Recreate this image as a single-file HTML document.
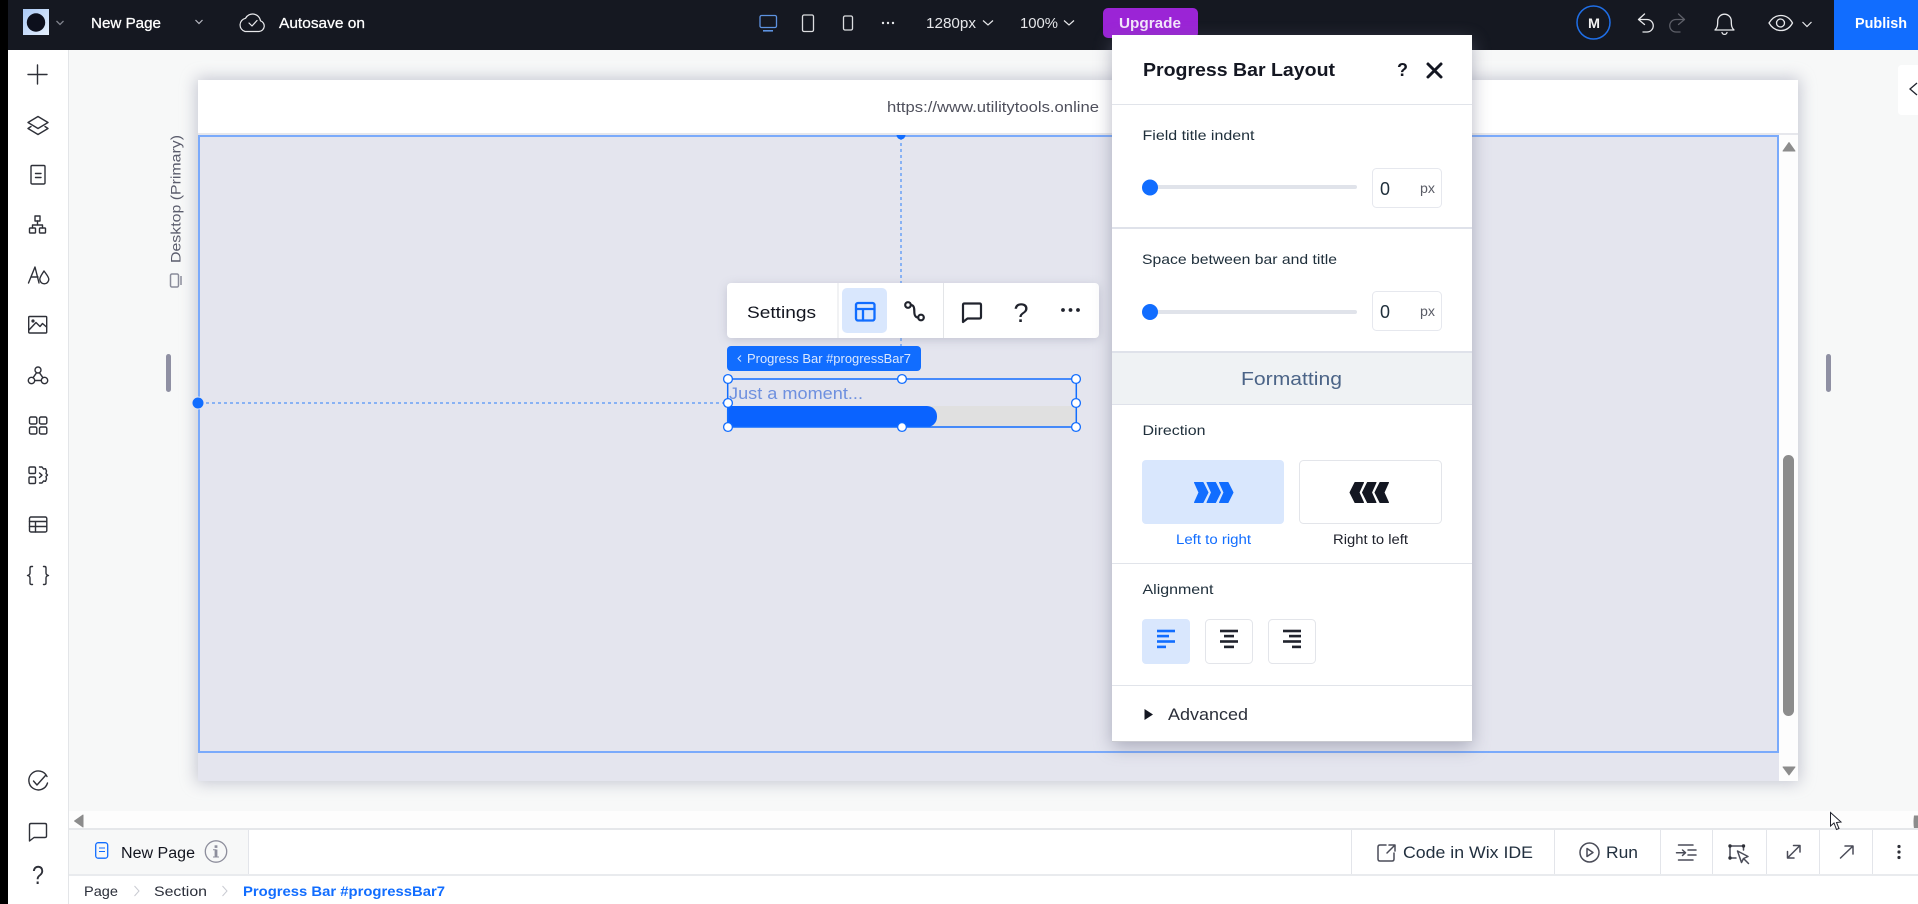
<!DOCTYPE html>
<html lang="en"><head><meta charset="utf-8"><title>Progress Bar Layout</title>
<style>
html,body{margin:0;padding:0;width:1918px;height:904px;overflow:hidden;background:#f7f8f8}
svg{display:block;position:absolute;left:0;top:0}
text{font-family:"Liberation Sans",sans-serif;white-space:pre}
.st{fill:none;stroke-linecap:round;stroke-linejoin:round}
.side{fill:none;stroke:#2e3038;stroke-width:1.4;stroke-linecap:round;stroke-linejoin:round}
.low{fill:none;stroke:#4a4c58;stroke-width:1.5;stroke-linecap:round;stroke-linejoin:round}
</style></head><body>
<svg width="1918" height="904" viewBox="0 0 1918 904" xmlns="http://www.w3.org/2000/svg">
<defs>
<filter id="s1" x="-10%" y="-10%" width="120%" height="120%"><feGaussianBlur stdDeviation="8"/></filter>
<filter id="s2" x="-20%" y="-20%" width="140%" height="140%"><feGaussianBlur stdDeviation="9"/></filter>
<filter id="s3" x="-20%" y="-40%" width="140%" height="180%"><feGaussianBlur stdDeviation="5"/></filter>
<linearGradient id="lg" x1="0" y1="0" x2="1" y2="1"><stop offset="0" stop-color="#a9c8f5"/><stop offset="1" stop-color="#e6f0fd"/></linearGradient>
</defs>

<!-- canvas -->
<rect width="1918" height="904" fill="#f7f8f8"/>
<rect x="196" y="78" width="1604" height="705" fill="#a9abbc" opacity=".65" filter="url(#s1)"/>
<rect x="198" y="80" width="1600" height="53" fill="#fff"/>
<rect x="198" y="133" width="1600" height="2" fill="#e6e7ec"/>
<rect x="198" y="135" width="1600" height="646" fill="#e4e5ee"/>
<rect x="1779" y="135" width="19" height="646" fill="#fdfdfd"/>
<rect x="199" y="136" width="1579" height="616" fill="none" stroke="#7aaafb" stroke-width="2"/>
<text x="887" y="112" font-size="14.5" fill="#4f505c" textLength="212" lengthAdjust="spacingAndGlyphs">https://www.utilitytools.online</text>

<!-- scrollbar -->
<path d="M1783 151 L1789 142.5 L1795 151 Z" fill="#8c8c8c" stroke="#8c8c8c" stroke-linejoin="round"/>
<rect x="1783" y="455" width="11" height="261" rx="5.5" fill="#8c8c8c"/>
<path d="M1783 767 L1795 767 L1789 775 Z" fill="#8c8c8c" stroke="#8c8c8c" stroke-linejoin="round"/>

<!-- side handles -->
<rect x="166" y="354" width="5" height="38" rx="2.5" fill="#8f90a3"/>
<rect x="1826" y="354" width="5" height="38" rx="2.5" fill="#8f90a3"/>

<!-- desktop label -->
<g transform="translate(180.5,263) rotate(-90)"><text x="0" y="0" font-size="14" fill="#5a5c6c" textLength="128" lengthAdjust="spacingAndGlyphs">Desktop (Primary)</text></g>
<rect x="170.5" y="274" width="8" height="13" rx="1.5" fill="none" stroke="#8a8c9a" stroke-width="1.5"/><path d="M181 276 V285" stroke="#8a8c9a" stroke-width="1.5"/>

<!-- dashed guides + handles -->
<path d="M901 137 V283 M901 338 V346" stroke="#2b7ffb" stroke-width="1" stroke-dasharray="3 3"/>
<path d="M200 403 H727" stroke="#2b7ffb" stroke-width="1" stroke-dasharray="3 3"/>
<path d="M896.5 135 a4.5 4.5 0 0 0 9 0 Z" fill="#116dff"/>
<circle cx="198" cy="403" r="6" fill="#116dff" stroke="#e4e5ee" stroke-width="1"/>

<!-- floating toolbar -->
<rect x="727" y="285" width="372" height="55" rx="6" fill="#8f91a8" opacity=".4" filter="url(#s3)"/>
<rect x="727" y="283" width="372" height="55" rx="4" fill="#fff"/>
<rect x="837.5" y="283" width="1" height="55" fill="#e3e5e8"/>
<rect x="943" y="283" width="1" height="55" fill="#e3e5e8"/>
<rect x="842" y="288" width="45" height="45" rx="5" fill="#d9e7fd"/>
<text x="747" y="318" font-size="17" fill="#12151f" textLength="69" lengthAdjust="spacingAndGlyphs">Settings</text>
<g class="st" stroke="#116dff" stroke-width="2.3"><rect x="856" y="303" width="18.5" height="17.5" rx="2"/><path d="M856 309 H874.5 M863 309 V320.5"/></g>
<g class="st" stroke="#20232d" stroke-width="2.2"><circle cx="908" cy="305" r="2.8"/><circle cx="921" cy="317.5" r="2.8"/><path d="M910.8 305 C914 305 914.3 308 914.3 311 C914.3 315 915 317.5 918.2 317.5"/>
<path d="M963 305 q0-1.5 1.5-1.5 h15 q1.5 0 1.5 1.5 v12 q0 1.5 -1.5 1.5 h-12 l-4.5 3.5 z"/></g>
<text x="1013.5" y="322" font-size="27" fill="#20232d" textLength="15" lengthAdjust="spacingAndGlyphs">?</text>
<circle cx="1063" cy="310" r="1.9" fill="#20232d"/><circle cx="1070.5" cy="310" r="1.9" fill="#20232d"/><circle cx="1078" cy="310" r="1.9" fill="#20232d"/>

<!-- tag -->
<rect x="727" y="346" width="194" height="25" rx="4" fill="#116dff"/>
<path d="M741 355.5 L738 358.5 L741 361.5" fill="none" stroke="#d8e6fe" stroke-width="1"/>
<text x="747" y="363" font-size="12.5" fill="#dbe8fe" textLength="164" lengthAdjust="spacingAndGlyphs">Progress Bar #progressBar7</text>

<!-- progress bar -->
<rect x="728" y="406" width="348" height="20.5" fill="#e0e0e0"/>
<path d="M728 406 H927 a10 10 0 0 1 10 10 v1 a10 10 0 0 1 -10 10 H728 Z" fill="#0a63ff"/>
<text x="729" y="399" font-size="17" fill="#6e90df" textLength="134" lengthAdjust="spacingAndGlyphs">Just a moment...</text>
<rect x="727.7" y="379" width="348.6" height="48" fill="none" stroke="#116dff" stroke-width="1.5"/>
<g fill="#fff" stroke="#116dff" stroke-width="1.3">
<circle cx="728" cy="379" r="4.4"/><circle cx="902" cy="379" r="4.4"/><circle cx="1076" cy="379" r="4.4"/>
<circle cx="728" cy="403" r="4.4"/><circle cx="1076" cy="403" r="4.4"/>
<circle cx="728" cy="427" r="4.4"/><circle cx="902" cy="427" r="4.4"/><circle cx="1076" cy="427" r="4.4"/>
</g>

<!-- right collapsed tab -->
<path d="M1918 65 H1902 q-4 0 -4 4 V111 q0 4 4 4 H1918 Z" fill="#fff"/>
<path d="M1917 83 L1910 89 L1917 95" fill="none" stroke="#20232d" stroke-width="1.3"/>

<!-- top bar -->
<rect x="8" y="0" width="1910" height="50" fill="#151821"/>
<rect x="23" y="9" width="26" height="26" fill="url(#lg)"/>
<circle cx="36" cy="22.5" r="9.2" fill="#0c0f1c"/>
<path d="M56.5 21 L60 24.5 L63.5 21" fill="none" stroke="#7f828c" stroke-width="1.3"/>
<text x="91" y="28" font-size="14.5" fill="#fff" stroke="#fff" stroke-width=".25" textLength="70" lengthAdjust="spacingAndGlyphs">New Page</text>
<path d="M195.5 20 L199 23.5 L202.5 20" fill="none" stroke="#b8bac2" stroke-width="1.2"/>
<g class="st" stroke="#e8e9ec" stroke-width="1.2"><path d="M245 31.5 h14 a5.5 5.5 0 0 0 1.5 -10.7 a8 8 0 0 0 -15 -2.5 a6.8 6.8 0 0 0 -.5 13.2 z"/><path d="M249 23 l3 3 l5 -5.5"/></g>
<text x="279" y="28" font-size="14.5" fill="#fff" stroke="#fff" stroke-width=".25" textLength="86" lengthAdjust="spacingAndGlyphs">Autosave on</text>

<rect x="760" y="15.5" width="16.5" height="12" rx="1.5" fill="none" stroke="#5d92e0" stroke-width="1.3"/>
<rect x="763" y="30" width="10" height="1.6" fill="#5d92e0"/>
<rect x="802.5" y="15" width="11" height="16.5" rx="1.5" fill="none" stroke="#dcdde0" stroke-width="1.3"/>
<rect x="843.5" y="16" width="9" height="14" rx="1.5" fill="none" stroke="#dcdde0" stroke-width="1.3"/>
<circle cx="883" cy="23" r="1.2" fill="#e6e7ea"/><circle cx="888" cy="23" r="1.2" fill="#e6e7ea"/><circle cx="893" cy="23" r="1.2" fill="#e6e7ea"/>
<text x="926" y="28" font-size="14.5" fill="#e6e7ea" textLength="50" lengthAdjust="spacingAndGlyphs">1280px</text>
<path d="M983 20.5 L988 25 L993 20.5" fill="none" stroke="#e6e7ea" stroke-width="1.2"/>
<text x="1020" y="28" font-size="14.5" fill="#e6e7ea" textLength="38" lengthAdjust="spacingAndGlyphs">100%</text>
<path d="M1064 20.5 L1069 25 L1074 20.5" fill="none" stroke="#e6e7ea" stroke-width="1.2"/>
<rect x="1103" y="8" width="95" height="30" rx="5" fill="#9b24d6"/>
<text x="1119" y="28" font-size="14.5" font-weight="700" fill="#f3e6fb" textLength="62" lengthAdjust="spacingAndGlyphs">Upgrade</text>

<circle cx="1593.5" cy="22.5" r="16.5" fill="none" stroke="#1f6fe8" stroke-width="1.5"/>
<text x="1588" y="28" font-size="13.5" font-weight="700" fill="#f2f2f2" textLength="12" lengthAdjust="spacingAndGlyphs">M</text>
<g class="st" stroke="#e8e9ec" stroke-width="1.3"><path d="M1644.5 14 L1638.5 19.5 L1644.5 24.5 M1639 19.5 H1647 a6 6 0 0 1 0 12.5 H1643"/></g>
<g class="st" stroke="#5d5f68" stroke-width="1.3"><path d="M1678.5 14 L1684.5 19.5 L1678.5 24.5 M1684 19.5 H1676 a6 6 0 0 0 0 12.5 H1680"/></g>
<g class="st" stroke="#e8e9ec" stroke-width="1.3"><path d="M1715 30 c2.5 -2 2.7 -5 2.7 -9 a6.8 6.8 0 0 1 13.6 0 c0 4 .2 7 2.7 9 Z M1722 32.5 a2.6 2.6 0 0 0 5 0"/>
<path d="M1769 23 c6 -10 18 -10 23.5 0 c-5.5 10 -17.5 10 -23.5 0 Z"/><circle cx="1780.5" cy="23" r="4"/></g>
<path d="M1802.5 22 L1807 26.5 L1811.5 22" fill="none" stroke="#e8e9ec" stroke-width="1.2"/>
<rect x="1834" y="0" width="84" height="50" fill="#116dff"/>
<text x="1855" y="28" font-size="14.5" font-weight="700" fill="#fff" textLength="52" lengthAdjust="spacingAndGlyphs">Publish</text>

<!-- panel -->
<rect x="1112" y="41" width="360" height="706" fill="#6f7188" opacity=".5" filter="url(#s2)"/>
<rect x="1112" y="35" width="360" height="706" fill="#fff"/>
<rect x="1112" y="741" width="360" height="1" fill="#c9cad0"/>
<text x="1143" y="76" font-size="18" font-weight="700" fill="#141722" textLength="192" lengthAdjust="spacingAndGlyphs">Progress Bar Layout</text>
<text x="1397" y="76" font-size="18" font-weight="700" fill="#141722">?</text>
<path d="M1428 64 L1441 77 M1441 64 L1428 77" stroke="#141722" stroke-width="3" stroke-linecap="round"/>
<rect x="1112" y="104" width="360" height="1" fill="#e1e4ea"/>

<text x="1142.5" y="140" font-size="14" fill="#20303c" textLength="112" lengthAdjust="spacingAndGlyphs">Field title indent</text>
<rect x="1150" y="185" width="207" height="4" rx="2" fill="#e0e3ea"/>
<circle cx="1150" cy="187.5" r="8" fill="#116dff"/>
<rect x="1372.5" y="168.5" width="69" height="39" rx="4" fill="#fff" stroke="#e6e8ee"/>
<text x="1380" y="195" font-size="18" fill="#20303c" textLength="10" lengthAdjust="spacingAndGlyphs">0</text>
<text x="1420" y="193" font-size="14" fill="#5a5c66" textLength="15" lengthAdjust="spacingAndGlyphs">px</text>
<rect x="1112" y="227" width="360" height="2" fill="#dfe2ea"/>

<text x="1142" y="264" font-size="14" fill="#20303c" textLength="195" lengthAdjust="spacingAndGlyphs">Space between bar and title</text>
<rect x="1150" y="310" width="207" height="4" rx="2" fill="#e0e3ea"/>
<circle cx="1150" cy="312" r="8" fill="#116dff"/>
<rect x="1372.5" y="291.5" width="69" height="39" rx="4" fill="#fff" stroke="#e6e8ee"/>
<text x="1380" y="318" font-size="18" fill="#20303c" textLength="10" lengthAdjust="spacingAndGlyphs">0</text>
<text x="1420" y="316" font-size="14" fill="#5a5c66" textLength="15" lengthAdjust="spacingAndGlyphs">px</text>

<rect x="1112" y="351" width="360" height="53" fill="#eff2f4"/>
<rect x="1112" y="351" width="360" height="2" fill="#dfe2ea"/>
<rect x="1112" y="404" width="360" height="1" fill="#dfe2ea"/>
<text x="1241" y="385" font-size="18" fill="#4b6487" textLength="101" lengthAdjust="spacingAndGlyphs">Formatting</text>

<text x="1142.5" y="435" font-size="14" fill="#20303c" textLength="63" lengthAdjust="spacingAndGlyphs">Direction</text>
<rect x="1142" y="460" width="142" height="64" rx="4" fill="#d9e7fd"/>
<rect x="1299.5" y="460.5" width="142" height="63" rx="4" fill="#fff" stroke="#e3e5ea"/>
<g fill="#116dff" stroke="#116dff" stroke-width="1" stroke-linejoin="round">
<path d="M1194.5 482.5 h8.5 l5 10 l-5 10 h-8.5 l4.5 -10 z"/><path d="M1207 482.5 h8.5 l5 10 l-5 10 h-8.5 l4.5 -10 z"/><path d="M1219.5 482.5 h8.5 l5 10 l-5 10 h-8.5 l4.5 -10 z"/></g>
<g fill="#141722" stroke="#141722" stroke-width="1" stroke-linejoin="round">
<path d="M1388.5 482.5 h-8.5 l-5 10 l5 10 h8.5 l-4.5 -10 z"/><path d="M1376 482.5 h-8.5 l-5 10 l5 10 h8.5 l-4.5 -10 z"/><path d="M1363.5 482.5 h-8.5 l-5 10 l5 10 h8.5 l-4.5 -10 z"/></g>
<text x="1176" y="544" font-size="13.5" fill="#116dff" textLength="75" lengthAdjust="spacingAndGlyphs">Left to right</text>
<text x="1333" y="544" font-size="13.5" fill="#20232d" textLength="75" lengthAdjust="spacingAndGlyphs">Right to left</text>
<rect x="1112" y="563" width="360" height="1" fill="#e1e4ea"/>

<text x="1142.5" y="594" font-size="14" fill="#20303c" textLength="71" lengthAdjust="spacingAndGlyphs">Alignment</text>
<rect x="1142" y="619" width="48" height="45" rx="4" fill="#d9e7fd"/>
<rect x="1205.5" y="619.5" width="47" height="44" rx="4" fill="#fff" stroke="#e3e5ea"/>
<rect x="1268.5" y="619.5" width="47" height="44" rx="4" fill="#fff" stroke="#e3e5ea"/>
<g fill="#116dff"><rect x="1157" y="629.7" width="18" height="2.6"/><rect x="1157" y="634.8" width="12" height="2.6"/><rect x="1157" y="640.2" width="18" height="2.6"/><rect x="1157" y="645.6" width="9" height="2.6"/></g>
<g fill="#20232d"><rect x="1220" y="629.7" width="18" height="2.6"/><rect x="1224" y="634.8" width="10" height="2.6"/><rect x="1220" y="640.2" width="18" height="2.6"/><rect x="1224" y="645.6" width="10" height="2.6"/>
<rect x="1283" y="629.7" width="18" height="2.6"/><rect x="1289" y="634.8" width="12" height="2.6"/><rect x="1283" y="640.2" width="18" height="2.6"/><rect x="1292" y="645.6" width="9" height="2.6"/></g>
<rect x="1112" y="685" width="360" height="1" fill="#e1e4ea"/>
<path d="M1144.5 709 L1153 714.5 L1144.5 720 Z" fill="#141722"/>
<text x="1168" y="720" font-size="17" fill="#2b2f3a" textLength="80" lengthAdjust="spacingAndGlyphs">Advanced</text>

<!-- bottom bars -->
<rect x="69" y="811" width="1849" height="17" fill="#fdfdfd"/>
<path d="M83 815 V827 L74.5 821 Z" fill="#8c8c8c" stroke="#8c8c8c" stroke-linejoin="round"/>
<path d="M1914 815.5 h4 v13 h-4 q-1 -6.5 0 -13 Z" fill="#8c8c8c"/>
<rect x="69" y="828" width="1849" height="2" fill="#e5e7ea"/>
<rect x="69" y="830" width="1849" height="44" fill="#fff"/>
<rect x="69" y="830" width="179" height="44" fill="#f7f8f8"/>
<rect x="248" y="830" width="1" height="44" fill="#e3e5ea"/>
<rect x="69" y="874" width="1849" height="2" fill="#e9ebee"/>
<rect x="69" y="876" width="1849" height="28" fill="#fff"/>

<rect x="95.7" y="842.7" width="12" height="15.5" rx="2.5" fill="none" stroke="#116dff" stroke-width="1.3"/>
<path d="M99 848 h6 M99 851.5 h6" stroke="#116dff" stroke-width="1.1"/>
<text x="121" y="858" font-size="15.5" fill="#12151f" textLength="74" lengthAdjust="spacingAndGlyphs">New Page</text>
<circle cx="216" cy="851.5" r="10.7" fill="none" stroke="#8d8e9c" stroke-width="1.3"/>
<rect x="214.6" y="849.5" width="2.8" height="7.5" fill="#8d8e9c"/><rect x="214.6" y="845.3" width="2.8" height="2.6" fill="#8d8e9c"/>
<path d="M213 849.7 h3 M213 857 h6" stroke="#8d8e9c" stroke-width="1"/>

<text x="84" y="896" font-size="14" fill="#2b2f3a" textLength="34" lengthAdjust="spacingAndGlyphs">Page</text>
<path d="M134.5 886 L139 891 L134.5 896" fill="none" stroke="#c9cbd2" stroke-width="1"/>
<text x="154" y="896" font-size="14" fill="#2b2f3a" textLength="53" lengthAdjust="spacingAndGlyphs">Section</text>
<path d="M222.5 886 L227 891 L222.5 896" fill="none" stroke="#c9cbd2" stroke-width="1"/>
<text x="243" y="896" font-size="14" font-weight="700" fill="#116dff" textLength="202" lengthAdjust="spacingAndGlyphs">Progress Bar #progressBar7</text>

<g fill="#e3e5ea"><rect x="1351" y="830" width="1" height="44"/><rect x="1554" y="830" width="1" height="44"/><rect x="1660" y="830" width="1" height="44"/><rect x="1712" y="830" width="1" height="44"/><rect x="1766" y="830" width="1" height="44"/><rect x="1819" y="830" width="1" height="44"/><rect x="1872" y="830" width="1" height="44"/></g>
<g class="low">
<path d="M1386 845 h-6 q-2 0 -2 2 v12 q0 2 2 2 h12 q2 0 2 -2 v-6 M1387 853 L1395 845 M1389 845 h6 v6"/>
<circle cx="1589.5" cy="852.5" r="9.5"/><path d="M1587 848.5 L1593 852.5 L1587 856.5 Z"/>
<path d="M1678.5 845 H1693 M1688 850 H1696 M1688 855 H1696 M1678.5 860 H1693 M1676.5 852.7 H1685 M1682.5 850 L1685.5 852.7 L1682.5 855.5"/>
<path d="M1730 846 H1743.5 V850 M1730 846 V858 H1736"/>
<path d="M1737.5 851 L1748 856.5 L1743.5 858.5 L1741.5 862.5 Z M1744 859 L1748.5 863.5"/>
<path d="M1788 857.5 L1799.5 846 M1793.5 845.5 H1800 V852 M1787.5 851.5 V858 H1794"/>
<path d="M1840.5 858 L1852.5 846.5 M1845 846 H1853 V854"/>
</g>
<g fill="#2e3038"><circle cx="1730" cy="846" r="1.7"/><circle cx="1743.5" cy="846" r="1.7"/><circle cx="1730" cy="858" r="1.7"/>
<circle cx="1899" cy="846.5" r="1.6"/><circle cx="1899" cy="852" r="1.6"/><circle cx="1899" cy="857.5" r="1.6"/></g>
<text x="1403" y="858" font-size="16.5" fill="#22303f" textLength="130" lengthAdjust="spacingAndGlyphs">Code in Wix IDE</text>
<text x="1606" y="858" font-size="16.5" fill="#22303f" textLength="32" lengthAdjust="spacingAndGlyphs">Run</text>

<!-- cursor -->
<path d="M1830.5 812.5 V826 L1834 823 L1836.5 829.5 L1839 828.5 L1836.5 822.5 L1841 822 Z" fill="#fff" stroke="#20232d" stroke-width="1"/>

<!-- left stripe + sidebar -->
<rect x="8" y="50" width="60" height="854" fill="#fff"/>
<rect x="68" y="50" width="1" height="854" fill="#e3e5e8"/>
<rect x="0" y="0" width="8" height="904" fill="#000"/>

<g class="side">
<path d="M37.5 65 V84 M28 74.5 H47"/>
<path d="M38 116.5 L48 122.5 L38 128.5 L28 122.5 Z M31 126.5 L28 128.5 L38 134.5 L48 128.5 L45 126.5"/>
<rect x="31" y="165.5" width="14" height="18.5" rx="1.2"/><path d="M35.5 173.5 h5.5 M35.5 177.5 h5.5"/>
<rect x="35" y="216" width="5" height="5"/><rect x="29.5" y="228" width="6" height="5" rx=".8"/><rect x="39.5" y="228" width="6" height="5" rx=".8"/><path d="M37.5 221 V225 M32.5 228 V225 H42.5 V228"/>
<path d="M28.5 283 L35 267 L39 283 M31 277 H38"/><path d="M44 271 C41.5 275 39.8 277 39.8 279.3 A4.4 4.4 0 0 0 48.8 279.3 C48.8 277 46.5 274.5 44 271 Z"/>
<rect x="28.7" y="316.5" width="18" height="16.5" rx="1"/><path d="M29 330 L36 322.5 L40 326.5 L42.5 323.5 L46.5 327"/><circle cx="33" cy="321" r=".9"/>
<circle cx="38" cy="370" r="3"/><circle cx="31.5" cy="380.5" r="3.2"/><circle cx="44.5" cy="380.5" r="3.2"/><path d="M36.5 372.8 L33 377.8 M39.5 372.8 L43 377.8 M34.7 380.5 H41.3"/>
<rect x="29.5" y="417" width="7.3" height="7" rx="1.5"/><rect x="39.5" y="417" width="7.3" height="7" rx="1.5"/><rect x="29.5" y="427" width="7.3" height="7" rx="1.5"/><rect x="39.5" y="427" width="7.3" height="7" rx="1.5"/>
<rect x="29" y="467" width="6.5" height="6.5" rx="1.3"/><rect x="29" y="477" width="6.5" height="6.5" rx="1.3"/>
<path d="M39.5 467 h2.5 l1.5 2 l2 -.3 l1 2.3 l-.5 2.5 l1.5 1.5 l-1.5 1.5 l.5 2.5 l-1 2.3 l-2 -.3 l-1.5 2 h-2.5 M39.5 473 l2.5 2.2 l-2.5 2.3"/>
<rect x="29.5" y="517" width="17.3" height="15" rx="1.5"/><path d="M29.5 521.5 H46.8 M29.5 526.5 H46.8 M35.5 521.5 V532"/>
<path d="M32.5 566.5 h-1 q-1.5 0 -1.5 1.5 v5 q0 2 -2.5 2.5 q2.5 .5 2.5 2.5 v5 q0 1.5 1.5 1.5 h1"/>
<path d="M43.5 566.5 h1 q1.5 0 1.5 1.5 v5 q0 2 2.5 2.5 q-2.5 .5 -2.5 2.5 v5 q0 1.5 -1.5 1.5 h-1"/>
<path d="M47 776.5 A9.5 9.5 0 1 0 47.5 783"/><path d="M33.5 781 L37 785 L45.5 775.5"/>
<path d="M29.5 825 q0 -1.5 1.5 -1.5 h14 q1.5 0 1.5 1.5 v11 q0 1.5 -1.5 1.5 h-11 l-4.5 3.5 z"/>
</g>
<text x="32" y="884" font-size="26" fill="#2e3038" textLength="12" lengthAdjust="spacingAndGlyphs">?</text>
</svg>
</body></html>
